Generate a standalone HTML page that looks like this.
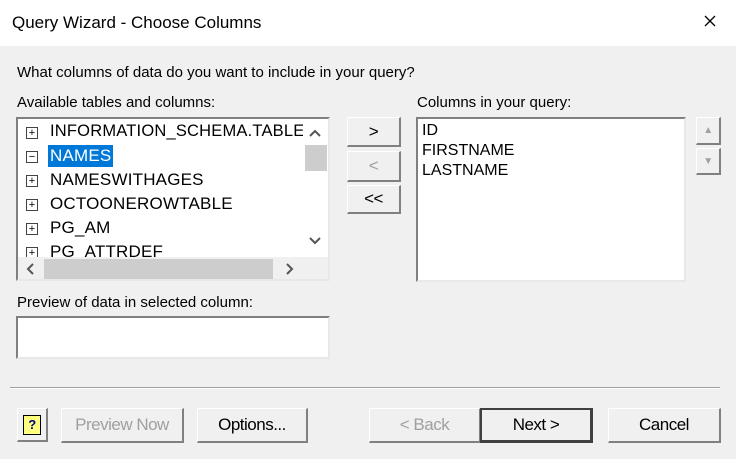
<!DOCTYPE html><html><head><style>
body{margin:0;width:736px;height:459px;background:#f0f0f0;font-family:"Liberation Sans",sans-serif;position:relative;overflow:hidden;color:#000}
.a{position:absolute}
.t{position:absolute;white-space:nowrap}
.sunk{position:absolute;background:#fff;border-top:2px solid #808080;border-left:2px solid #808080;border-right:2px solid #e8e8e8;border-bottom:2px solid #e8e8e8;box-sizing:border-box}
.btn{position:absolute;box-sizing:border-box;background:#f0f0f0;border-top:1px solid #fff;border-left:1px solid #fff;border-right:2px solid #808080;border-bottom:2px solid #808080;display:flex;align-items:center;justify-content:center;font-size:17px;letter-spacing:-0.5px}
.dis{color:#a0a0a0}
.row{position:absolute;left:32px;font-size:17px;letter-spacing:0.2px}
.pb{position:absolute;left:8px;width:10px;height:10px;border:1px solid #444;font-size:11px;line-height:10px;text-align:center}
</style></head><body>
<div class="a" style="left:0;top:0;width:736px;height:46px;background:#fff"></div>
<div class="t" style="left:12px;top:13px;font-size:17px">Query Wizard - Choose Columns</div>
<svg class="a" style="left:704px;top:15px" width="12" height="12"><path d="M1 1L11 11M11 1L1 11" stroke="#000" stroke-width="1.3"/></svg>
<div class="t" style="left:17px;top:64px;font-size:15px">What columns of data do you want to include in your query?</div>
<div class="t" style="left:17px;top:94px;font-size:15px">Available tables and columns:</div>
<div class="sunk" style="left:16px;top:117px;width:314px;height:164px;overflow:hidden">
 <div class="pb" style="top:8px">+</div><div class="row" style="top:3px;font-size:16.5px">INFORMATION_SCHEMA.TABLES</div>
 <div class="pb" style="top:32px">−</div><div class="row" style="top:26px;background:#0078d7;color:#fff;padding:0 2px;left:30px;height:22px;line-height:22px">NAMES</div>
 <div class="pb" style="top:56px">+</div><div class="row" style="top:51px">NAMESWITHAGES</div>
 <div class="pb" style="top:80px">+</div><div class="row" style="top:75px">OCTOONEROWTABLE</div>
 <div class="pb" style="top:104px">+</div><div class="row" style="top:99px">PG_AM</div>
 <div class="pb" style="top:128px">+</div><div class="row" style="top:123px">PG_ATTRDEF</div>
 <div class="a" style="left:285px;top:0;width:25px;height:140px;background:#fff"></div>
 <div class="a" style="left:287px;top:26px;width:22px;height:26px;background:#cdcdcd"></div>
 <svg class="a" style="left:291px;top:10px" width="12" height="8"><path d="M1 7L6 2L11 7" stroke="#555" stroke-width="2" fill="none"/></svg>
 <svg class="a" style="left:291px;top:118px" width="12" height="8"><path d="M1 1L6 6L11 1" stroke="#555" stroke-width="2" fill="none"/></svg>
 <div class="a" style="left:0;top:138px;width:310px;height:24px;background:#f0f0f0"></div>
 <div class="a" style="left:26px;top:140px;width:229px;height:20px;background:#cdcdcd"></div>
 <svg class="a" style="left:8px;top:144px" width="8" height="12"><path d="M7 1L2 6L7 11" stroke="#555" stroke-width="2" fill="none"/></svg>
 <svg class="a" style="left:268px;top:144px" width="8" height="12"><path d="M1 1L6 6L1 11" stroke="#555" stroke-width="2" fill="none"/></svg>
</div>
<div class="btn" style="left:347px;top:117px;width:54px;height:30px">&gt;</div>
<div class="btn dis" style="left:347px;top:151px;width:54px;height:31px">&lt;</div>
<div class="btn" style="left:347px;top:185px;width:54px;height:29px">&lt;&lt;</div>
<div class="t" style="left:417px;top:94px;font-size:15px">Columns in your query:</div>
<div class="sunk" style="left:416px;top:117px;width:270px;height:165px">
 <div class="t" style="left:4px;top:2px;font-size:16px;line-height:20px">ID<br>FIRSTNAME<br>LASTNAME</div>
</div>
<div class="btn" style="left:696px;top:117px;width:25px;height:28px;font-size:10px;color:#a0a0a0">▲</div>
<div class="btn" style="left:696px;top:148px;width:25px;height:27px;font-size:10px;color:#a0a0a0">▼</div>
<div class="t" style="left:17px;top:294px;font-size:15px">Preview of data in selected column:</div>
<div class="sunk" style="left:16px;top:316px;width:314px;height:43px"></div>
<div class="a" style="left:10px;top:387px;width:710px;height:1px;background:#a0a0a0;border-bottom:1px solid #fff"></div>
<div class="btn" style="left:17px;top:408px;width:31px;height:34px">
 <div style="width:16px;height:18px;background:#ffff80;border:1px solid #000;font-size:13px;font-weight:bold;line-height:18px;text-align:center;color:#000080">?</div></div>
<div class="btn dis" style="left:61px;top:408px;width:123px;height:35px">Preview Now</div>
<div class="btn" style="left:197px;top:408px;width:111px;height:35px">Options...</div>
<div class="btn dis" style="left:369px;top:408px;width:112px;height:35px">&lt; Back</div>
<div class="btn" style="left:480px;top:408px;width:113px;height:35px;border:2px solid #404040;border-right:3px solid #404040;border-bottom:3px solid #404040">Next &gt;</div>
<div class="btn" style="left:608px;top:408px;width:113px;height:35px">Cancel</div>
</body></html>
